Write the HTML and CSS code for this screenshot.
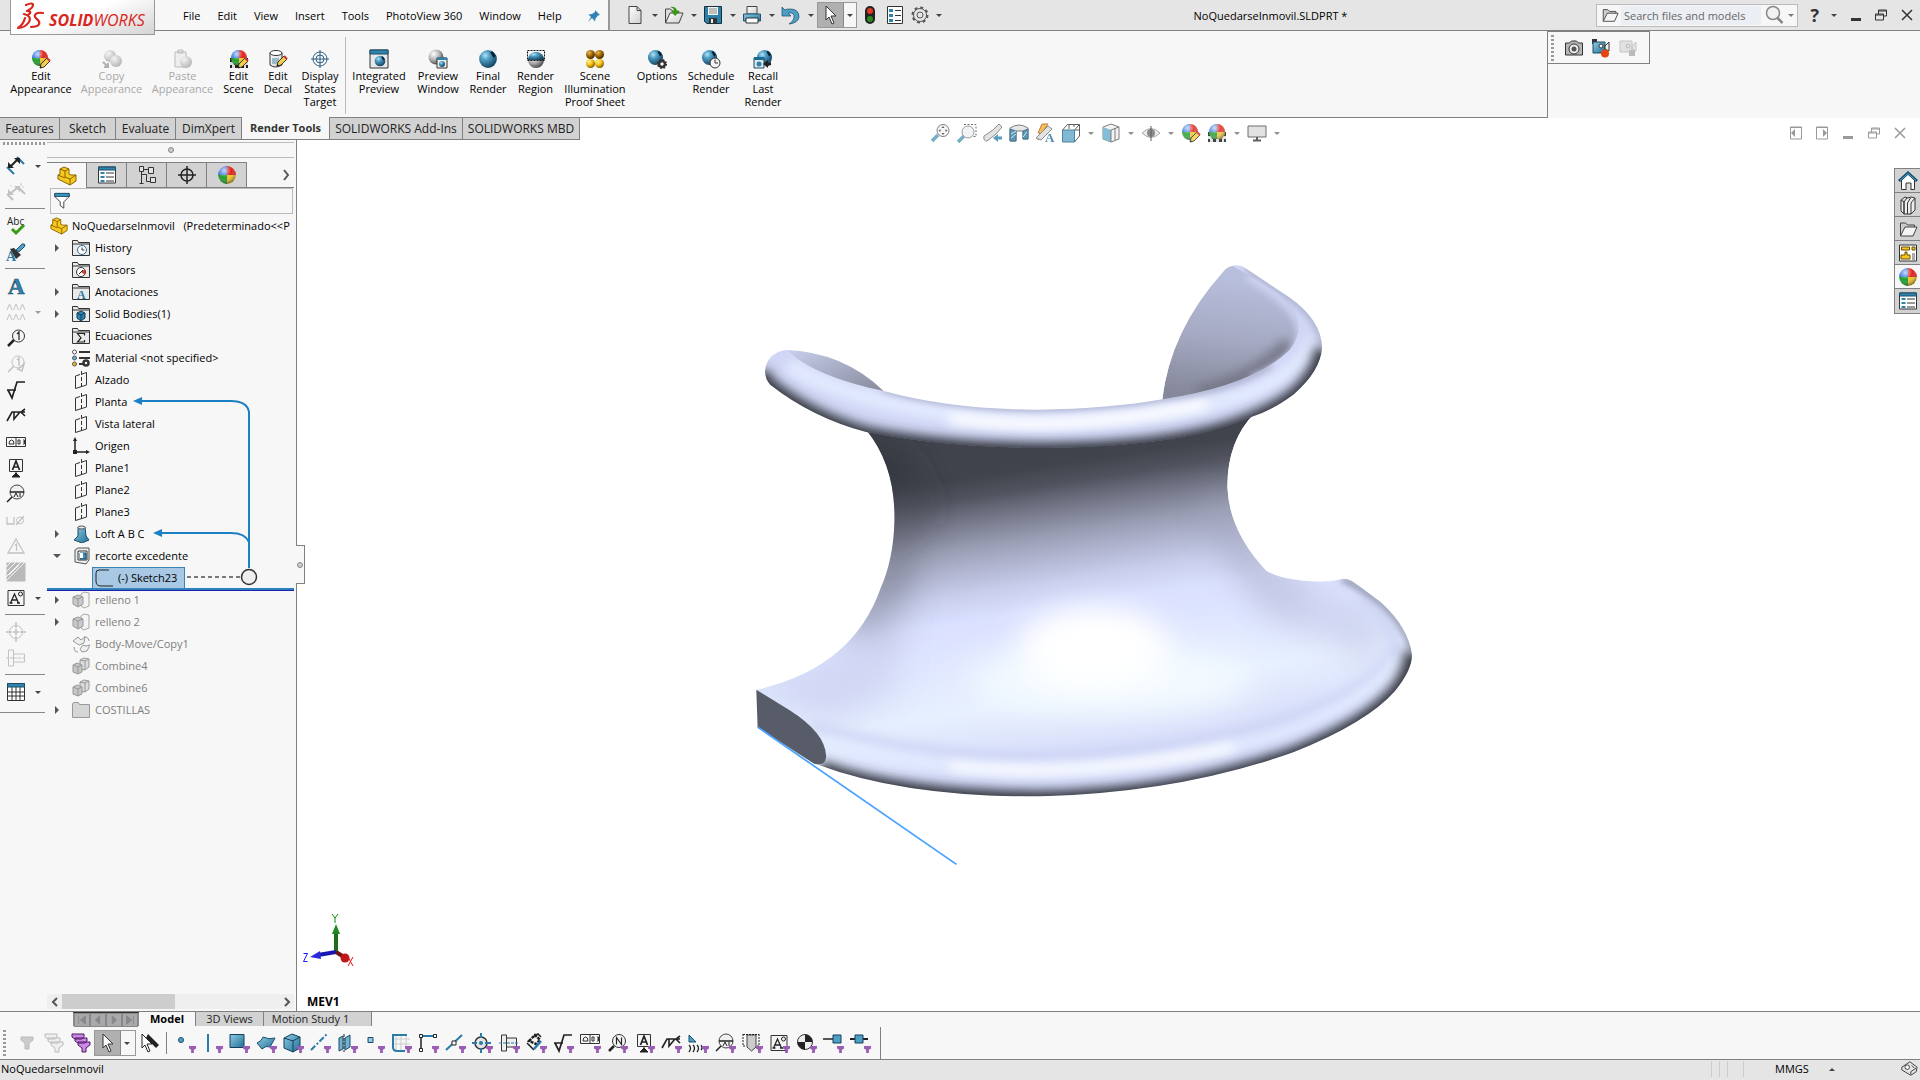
FILE: index.html
```html
<!DOCTYPE html>
<html lang="en">
<head>
<meta charset="utf-8">
<title>NoQuedarseInmovil.SLDPRT</title>
<link rel="stylesheet" href="styles.css">
</head>
<body>
<svg class="defs" aria-hidden="true">
<defs>
<radialGradient id="gBlue" cx=".35" cy=".3" r=".75"><stop offset="0" stop-color="#b5e0f2"/><stop offset=".35" stop-color="#4c9cc4"/><stop offset="1" stop-color="#123f5a"/></radialGradient>
<radialGradient id="gGray" cx=".35" cy=".3" r=".75"><stop offset="0" stop-color="#fff"/><stop offset=".5" stop-color="#b5b5b5"/><stop offset="1" stop-color="#444"/></radialGradient>
<radialGradient id="gPale" cx=".35" cy=".3" r=".75"><stop offset="0" stop-color="#f4f4f4"/><stop offset="1" stop-color="#b4b4b4"/></radialGradient>
<radialGradient id="gGold" cx=".35" cy=".3" r=".75"><stop offset="0" stop-color="#fff0a0"/><stop offset=".5" stop-color="#f2c010"/><stop offset="1" stop-color="#7a5200"/></radialGradient>
<radialGradient id="gBrown" cx=".35" cy=".3" r=".75"><stop offset="0" stop-color="#e8b860"/><stop offset=".5" stop-color="#a06a00"/><stop offset="1" stop-color="#3a2300"/></radialGradient>
<radialGradient id="gShine" cx=".35" cy=".25" r=".8"><stop offset="0" stop-color="#fff" stop-opacity=".75"/><stop offset=".5" stop-color="#fff" stop-opacity="0"/><stop offset="1" stop-color="#000" stop-opacity=".55"/></radialGradient>
<linearGradient id="gSteel" x2="1" y2="1"><stop offset="0" stop-color="#8fcbe4"/><stop offset="1" stop-color="#1f6f96"/></linearGradient>
<linearGradient id="gPaper" x2="1" y2="1"><stop offset="0" stop-color="#fff"/><stop offset="1" stop-color="#cfcfcf"/></linearGradient>
<clipPath id="cBall"><circle cx="9" cy="9" r="8"/></clipPath>

<symbol id="ball" viewBox="0 0 18 18"><g clip-path="url(#cBall)"><path d="M0 0h9v9H0z" fill="#2f6fe0"/><path d="M9 0h9v9H9z" fill="#e0231c"/><path d="M0 9h9v9H0z" fill="#1f9c2c"/><path d="M9 9h9v9H9z" fill="#f0c428"/><circle cx="9" cy="9" r="8" fill="url(#gShine)"/></g></symbol>
<symbol id="sphere" viewBox="0 0 18 18"><circle cx="9" cy="9" r="8" fill="url(#gBlue)"/><path d="M11 3l2-1 3 4-2 2z" fill="#06212f"/></symbol>
<symbol id="pencil" viewBox="0 0 12 12"><path d="M1 11l1-4 6-6 3 3-6 6z" fill="#f5cf4a" stroke="#222" stroke-width=".9"/><path d="M8 1l3 3" stroke="#c33" stroke-width="2"/><path d="M1 11l.5-2 1.5 1.500z" fill="#111"/></symbol>
<symbol id="appear" viewBox="0 0 20 20"><use href="#ball" width="18" height="18"/><use href="#pencil" x="8" y="8" width="12" height="12"/></symbol>
<symbol id="copyap" viewBox="0 0 20 20"><circle cx="8" cy="7" r="6" fill="url(#gPale)"/><circle cx="14" cy="12" r="6" fill="url(#gPale)"/><path d="M1 13l5 5m0-4v4H2" stroke="#b0b0b0" stroke-width="2" fill="none"/></symbol>
<symbol id="pasteap" viewBox="0 0 20 20"><path d="M2 3h11v15H2zM5 1h5v3H5z" fill="#eee" stroke="#bbb"/><circle cx="13" cy="13" r="6" fill="url(#gPale)"/></symbol>
<symbol id="scene" viewBox="0 0 20 20"><path d="M1 9h18v10H1z" fill="#222"/><path d="M1 13h4v3H1zM8 16h4v3H8zM15 13h4v3h-4zM4 9h3v4H4z" fill="#ddd"/><use href="#ball" x="1" width="18" height="18"/><path d="M1 16h18v3H1z" fill="#222"/><path d="M3 16h3v3H3zM9 16h3v3H9zM15 16h2v3h-2z" fill="#ddd"/></symbol>
<symbol id="sceneed" viewBox="0 0 20 20"><use href="#scene" width="20" height="20"/><use href="#pencil" x="8" y="8" width="12" height="12"/></symbol>
<symbol id="decal" viewBox="0 0 20 20"><path d="M2 4v12q5 4 12 0V4" fill="url(#gPaper)" stroke="#333"/><ellipse cx="8" cy="4" rx="6" ry="2.500" fill="#fff" stroke="#333"/><path d="M4 9h7v6H4z" fill="#9cb9c8"/><use href="#pencil" x="8" y="6" width="12" height="12"/></symbol>
<symbol id="target" viewBox="0 0 20 20"><g fill="none" stroke="#2b5f86"><circle cx="10" cy="10" r="7"/><circle cx="10" cy="10" r="4"/><path d="M10 1v18M1 10h18"/></g></symbol>
<symbol id="intprev" viewBox="0 0 20 20"><path d="M1 1h18v18H1z" fill="#e8e8e8" stroke="#333"/><path d="M1 1h18v4H1z" fill="#2f83ad" stroke="#1b4d68"/><use href="#sphere" x="5" y="6" width="12" height="12"/></symbol>
<symbol id="prevwin" viewBox="0 0 20 20"><circle cx="8" cy="8" r="7.500" fill="url(#gGray)"/><path d="M9 9h10v10H9z" fill="#eee" stroke="#333"/><path d="M9 8.500h10V11H9z" fill="#2f83ad"/><circle cx="14" cy="15" r="3" fill="url(#gBlue)"/></symbol>
<symbol id="region" viewBox="0 0 20 20"><circle cx="10" cy="11" r="8" fill="url(#gGray)"/><path d="M2 11a8 8 0 0 1 16 0z" fill="url(#gBlue)"/><path d="M1.500 1.500h17v10h-17z" fill="none" stroke="#111" stroke-dasharray="2 1"/></symbol>
<symbol id="illum" viewBox="0 0 20 20"><circle cx="5.500" cy="5.500" r="4.500" fill="url(#gBrown)"/><circle cx="14.500" cy="5.500" r="4.500" fill="url(#gBrown)"/><circle cx="5.500" cy="14.500" r="4.500" fill="url(#gGold)"/><circle cx="14.500" cy="14.500" r="4.500" fill="url(#gGold)"/></symbol>
<symbol id="opts" viewBox="0 0 20 20"><use href="#sphere" width="17" height="17"/><circle cx="15" cy="15" r="3" fill="none" stroke="#333" stroke-width="2.500"/><circle cx="15" cy="15" r="4.300" fill="none" stroke="#333" stroke-width="1.500" stroke-dasharray="1.700 1.700"/></symbol>
<symbol id="sched" viewBox="0 0 20 20"><use href="#sphere" width="17" height="17"/><circle cx="14" cy="14" r="5" fill="#f4f4f4" stroke="#333"/><path d="M14 10.500V14h3" fill="none" stroke="#333"/></symbol>
<symbol id="recall" viewBox="0 0 20 20"><use href="#sphere" x="3" width="17" height="17"/><path d="M1 9h10v10H1z" fill="#dde7ec" stroke="#1b4d68"/><path d="M1 8h10v3H1z" fill="#1b6a90"/><circle cx="6" cy="15" r="2.500" fill="#2f83ad"/><path d="M10 15l5-4v3h2l1-3v5l-3 1v2z" fill="#222"/></symbol>

<symbol id="new" viewBox="0 0 20 20"><path d="M4 1.500h8l4 4v13H4z" fill="url(#gPaper)" stroke="#444"/><path d="M12 1.500v4h4" fill="none" stroke="#444"/></symbol>
<symbol id="open" viewBox="0 0 20 20"><path d="M1.500 18V4h5l2 2h6v3" fill="#ddd" stroke="#444"/><path d="M1.500 18L6 8h13l-4 10z" fill="url(#gPaper)" stroke="#444"/><path d="M6 2q6-1 7 4h3l-5 5-4-5h3q0-3-4-4z" fill="#3a9a18"/></symbol>
<symbol id="save" viewBox="0 0 20 20"><path d="M1.500 1.500h17v17H4l-2.500-2z" fill="#2b7fa8" stroke="#1a2f3c"/><path d="M5 2h10v8H5z" fill="#f4f4f4"/><path d="M6 4h8M6 6h8M6 8h8" stroke="#888"/><path d="M6 13h8v5H6z" fill="#333"/><path d="M8 14h2v4H8z" fill="#eee"/></symbol>
<symbol id="print" viewBox="0 0 20 20"><path d="M5 1.500h10V9H5z" fill="url(#gPaper)" stroke="#444"/><path d="M1.500 9h17v7h-17z" fill="url(#gSteel)" stroke="#23556e"/><path d="M4 13h12v5H4z" fill="#fff" stroke="#333"/></symbol>
<symbol id="undo" viewBox="0 0 20 20"><path d="M1 2v9h9L7 8q7-1 6 5-1 4-5 6 9-1 10-7 0-8-9-8-4 0-5 1z" fill="#4e9fc5" stroke="#1f5673" stroke-width=".8"/></symbol>
<symbol id="cursor" viewBox="0 0 20 20"><path d="M5 1v14l3-3 3 7 2-1-3-7h5z" fill="#fff" stroke="#333"/></symbol>
<symbol id="traffic" viewBox="0 0 20 20"><rect x="5" y="1" width="10" height="18" rx="5" fill="#222"/><circle cx="10" cy="6" r="3" fill="#e23a20"/><circle cx="10" cy="14" r="3" fill="#2c8a20"/></symbol>
<symbol id="list" viewBox="0 0 20 20"><path d="M2.500 1.500h15v17h-15z" fill="#fff" stroke="#333"/><path d="M4 4h4v3H4zM4 9h4v3H4zM4 14h4v3H4z" fill="#2f83ad"/><path d="M10 5.500h6M10 10.500h6M10 15.500h6" stroke="#333"/></symbol>
<symbol id="gear" viewBox="0 0 20 20"><g fill="none" stroke="#555"><circle cx="10" cy="10" r="7.500" stroke-width="2" stroke-dasharray="3 2.890"/><circle cx="10" cy="10" r="6.500"/><circle cx="10" cy="10" r="3"/></g></symbol>
<symbol id="pin" viewBox="0 0 14 14"><path d="M8 1l5 5-2 .5-2.500 3-.5 3L5 9l-4 4 3-5L1.500 5.500l3.500-.5 3-2z" fill="#2f83b5"/></symbol>
<symbol id="folder" viewBox="0 0 20 20"><path d="M2.500 17V4h5l2 2h7v3" fill="#ccc" stroke="#444"/><path d="M2.500 17L7 8h12l-4 9z" fill="#f4f4f4" stroke="#444"/></symbol>
<symbol id="lens" viewBox="0 0 20 20"><circle cx="9" cy="8" r="6.500" fill="#f2f2f2" stroke="#888" stroke-width="1.500"/><path d="M13.500 13l5 5" stroke="#888" stroke-width="2.500"/></symbol>
<symbol id="min" viewBox="0 0 14 14"><path d="M2 10h10v3H2z" fill="currentColor"/></symbol>
<symbol id="restore" viewBox="0 0 14 14"><path d="M1.500 6h8v6h-8zM4.500 6V2h8v6h-3M1.500 7h8M4.500 3h8" fill="none" stroke="currentColor"/></symbol>
<symbol id="close" viewBox="0 0 14 14"><path d="M2 2l10 10M12 2L2 12" stroke="currentColor" stroke-width="1.500"/></symbol>
<symbol id="dockl" viewBox="0 0 14 14"><path d="M1.500 1h11v12h-11zM1.500 1.500h11" fill="none" stroke="currentColor"/><path d="M2 7l4-4v8z" fill="currentColor"/></symbol>
<symbol id="dockr" viewBox="0 0 14 14"><path d="M1.500 1h11v12h-11zM1.500 1.500h11" fill="none" stroke="currentColor"/><path d="M12 7L8 3v8z" fill="currentColor"/></symbol>
<symbol id="camera" viewBox="0 0 20 20"><path d="M1.500 5h4l2-2h5l2 2h4v12h-17z" fill="#b5b5b5" stroke="#333"/><circle cx="10" cy="11" r="5" fill="#eee" stroke="#333"/><circle cx="10" cy="11" r="2.500" fill="#555"/></symbol>
<symbol id="rec" viewBox="0 0 20 20"><path d="M1 1h5v5H1z" fill="#333"/><path d="M2 4h12v11H2z" fill="url(#gSteel)" stroke="#1d4c64"/><path d="M14 8l4-4v9l-4-2z" fill="#eee" stroke="#333"/><circle cx="10" cy="8" r="2" fill="#fff" stroke="#333"/><circle cx="14" cy="15.500" r="4" fill="#e8430c"/></symbol>
<symbol id="recoff" viewBox="0 0 20 20"><path d="M2 3h12v11H2zM14 8l4-4v9l-4-2z" fill="#e2e2e2" stroke="#c4c4c4"/><circle cx="10" cy="8" r="2" fill="none" stroke="#bbb"/><path d="M11 12h6v6h-6z" fill="#bbb"/></symbol>

<symbol id="zfit" viewBox="0 0 20 20"><path d="M1 18l6-6" stroke="#5fa0bd" stroke-width="3.500"/><circle cx="12" cy="7.500" r="6" fill="#f6f6f6" stroke="#666"/><path d="M12 3l1.500 2h-3zM12 12l1.500-2h-3zM7.500 7.500l2-1.500v3zM16.500 7.500l-2-1.500v3z" fill="#444"/></symbol>
<symbol id="zarea" viewBox="0 0 20 20"><path d="M7 1.500h12v12h-4" fill="none" stroke="#555" stroke-dasharray="2 1.500"/><path d="M1 19l6-6" stroke="#5fa0bd" stroke-width="3.500"/><circle cx="11" cy="9" r="6" fill="#eef3f5" stroke="#888"/></symbol>
<symbol id="zprev" viewBox="0 0 20 20"><path d="M1 13l9-6 6-6 3 3-6 7-9 7q-4 0-3-5z" fill="#ddd" stroke="#777"/><path d="M10 15l5-4v2.500h4v3h-4V19z" fill="#3f8db3"/></symbol>
<symbol id="section" viewBox="0 0 20 20"><path d="M1 5q9-6 18 0v11h-5V8H7v10H1z" fill="#e2e2e2" stroke="#666"/><path d="M1 6l6 2v10H1zM14 8l5-2v10h-5z" fill="#3d86aa" stroke="#2a5e7a"/><path d="M2 11l5-3M2 15l5-4M14 14l4-5" stroke="#cfe6f0"/></symbol>
<symbol id="dynamic" viewBox="0 0 20 20"><path d="M3 10l4-9h6L9 7h5L3 17l2-7z" fill="#f3b23c" stroke="#b46a20"/><path d="M1 15L13 3l4 3L6 17z" fill="#ddd" stroke="#777"/><text x="10" y="19" class="serif" font-size="13" fill="#2f7aa3">A</text></symbol>
<symbol id="orient" viewBox="0 0 20 20"><path d="M1.500 7h12v12h-12z" fill="#69adcc" stroke="#2f6f90"/><path d="M1.500 7l5-5.500h12V13l-5 6M13.500 7l5-5.500M8 1.500V6M13 1.500V4M18 7h-4" fill="none" stroke="#444"/></symbol>
<symbol id="style" viewBox="0 0 20 20"><path d="M2 4l8-3 8 3v12l-8 3-8-3z" fill="#f2f2f2" stroke="#666"/><path d="M2 4l8 3v12l-8-3z" fill="#6fb2d0"/><path d="M10 7l8-3M10 7v12M14 5v12" stroke="#666" fill="none"/></symbol>
<symbol id="eye" viewBox="0 0 20 20"><path d="M1 10q9-9 18 0-9 9-18 0z" fill="#e8e8e8" stroke="#999"/><circle cx="10" cy="10" r="4" fill="#777"/><path d="M10 3v15" stroke="#444"/></symbol>
<symbol id="monitor" viewBox="0 0 20 20"><path d="M1 3h18v11H1z" fill="#ddd" stroke="#555"/><path d="M10 14v3M6 17.500h8" stroke="#444" stroke-width="2"/></symbol>

<symbol id="part" viewBox="0 0 20 20"><path d="M1 9l2-1V3l4-2 5 2v5l2 1 5 0v6l-6 4L1 13z" fill="#f7c81e" stroke="#8a6400"/><path d="M3 3l5 2 4-2M8 5v6l5 2 6-4M13 13v6M1 9l7 3" fill="none" stroke="#8a6400"/></symbol>
<symbol id="prop" viewBox="0 0 20 20"><path d="M1.500 2h17v16h-17z" fill="#fff" stroke="#333"/><path d="M1.500 2h17v3h-17z" fill="#2f83ad" stroke="#1b4d68"/><path d="M3.500 7h4v2h-4zM3.500 11h4v2h-4zM3.500 15h4v2h-4z" fill="#2f83ad"/><path d="M9 8h8M9 12h8M9 16h8" stroke="#333"/></symbol>
<symbol id="config" viewBox="0 0 20 20"><path d="M2.500 1.500h4v5h-4zM4.500 6.500v12M7 4.500h5M4.500 9.500h5v7h4M11.500 2.500h5v6h-5zM13.500 12.500h5v5h-5zM2.500 18.500h4" fill="#f4f4f4" fill-opacity=".5" stroke="#333"/></symbol>
<symbol id="cross" viewBox="0 0 20 20"><circle cx="10" cy="10" r="6" fill="none" stroke="#222" stroke-width="1.500"/><path d="M10 1v18M1 10h18" stroke="#222" stroke-width="1.500"/></symbol>
<symbol id="filter" viewBox="0 0 18 20"><path d="M1 2h16v3l-6 6v7l-4-3v-4L1 5z" fill="#fff" stroke="#333"/><path d="M1 1.500h16V5H1z" fill="#3a92bd" stroke="#1b4d68"/></symbol>

<symbol id="dir" viewBox="0 0 18 18"><path d="M.5 16.500v-15h5l1 2h11v13z" fill="#e9e9e9" stroke="#333"/><path d="M1 5h16" stroke="#333"/></symbol>
<symbol id="t-hist" viewBox="0 0 18 18"><use href="#dir" width="18" height="18"/><circle cx="10" cy="11" r="4.500" fill="#fff" stroke="#2f6f9a"/><path d="M10 8.500V11h2.500" fill="none" stroke="#333"/></symbol>
<symbol id="t-sens" viewBox="0 0 18 18"><use href="#dir" width="18" height="18"/><circle cx="9" cy="11" r="4.500" fill="#fff" stroke="#333"/><path d="M9 11l4-3v6z" fill="#e04020"/><path d="M7 13l4-4" stroke="#222"/></symbol>
<symbol id="t-ann" viewBox="0 0 18 18"><use href="#dir" width="18" height="18"/><text x="5" y="15.500" class="serif" font-size="12" fill="#2f7aa3">A</text></symbol>
<symbol id="t-solid" viewBox="0 0 18 18"><use href="#dir" width="18" height="18"/><path d="M5 8l4-2 4 2v5l-4 3-4-3z" fill="#2f83ad" stroke="#123f5a"/><path d="M5 8l4 2 4-2M9 10v6" fill="none" stroke="#123f5a"/></symbol>
<symbol id="t-eq" viewBox="0 0 18 18"><use href="#dir" width="18" height="18"/><path d="M12.500 8.500v-2h-7L9 11l-3.500 4h7v-2" fill="none" stroke="#222" stroke-width="1.200"/></symbol>
<symbol id="t-mat" viewBox="0 0 18 18"><circle cx="2.500" cy="3" r="2" fill="#fff" stroke="#555"/><circle cx="2.500" cy="9" r="2" fill="#5fb0d8" stroke="#555"/><circle cx="2.500" cy="15" r="2" fill="#f0b820" stroke="#555"/><path d="M7 3h11M7 9h11M7 15h4" stroke="#333" stroke-width="2"/><circle cx="14" cy="14" r="2.500" fill="none" stroke="#333" stroke-width="2.500"/></symbol>
<symbol id="t-plane" viewBox="0 0 18 18"><path d="M3.500 5v12.500l11-3.500V1.500L10 3M8 3.500L3.500 5" fill="none" stroke="#333"/><path d="M9.500 0v18" stroke="#333" stroke-dasharray="4 2"/></symbol>
<symbol id="t-orig" viewBox="0 0 18 18"><path d="M3 2v13h13" fill="none" stroke="#222" stroke-width="1.500"/><path d="M3 0l2 4H1zM18 15l-4-2v4zM1 13h4v4H1z" fill="#222"/></symbol>
<symbol id="t-loft" viewBox="0 0 18 18"><path d="M6 2h7l1 9 3 4-7 3-8-3 4-4z" fill="url(#gSteel)" stroke="#1b4d68"/><ellipse cx="9.500" cy="2.500" rx="3.500" ry="1.500" fill="#eee" stroke="#555"/></symbol>
<symbol id="t-cut" viewBox="0 0 18 18"><path d="M3 3l3-2h11v12l-3 4-11-2z" fill="#eee" stroke="#555"/><path d="M6 4h9v9H6z" fill="#fff" stroke="#333"/><path d="M8 6h6v6H8z" fill="#3a92bd" stroke="#1b4d68"/><path d="M8 6h3v5H8z" fill="#fff"/></symbol>
<symbol id="t-sk" viewBox="0 0 18 18"><path d="M14 1H4Q1 1 1 4v8q0 5 5 5h12" fill="none" stroke="#222"/></symbol>
<symbol id="t-fill" viewBox="0 0 18 18"><path d="M9 3l3-2 5 1v13l-5 2-3-2z" fill="#f4f4f4" stroke="#a8a8a8"/><path d="M1 6l5-2 5 2v7l-5 3-5-3z" fill="#c9c9c9" stroke="#999"/><path d="M1 6l5 2 5-2M6 8v8" fill="none" stroke="#999"/></symbol>
<symbol id="t-move" viewBox="0 0 18 18"><path d="M1 6l5-4 3 3 4-3-1 6-5 2zM8 14l3-4 3 1 4-1-3 6-5 1zM12 2q4-1 5 4M6 17q-4 0-4-5" fill="#eee" stroke="#999"/></symbol>
<symbol id="t-comb" viewBox="0 0 18 18"><path d="M8 3l4-2 5 1v8l-4 3-5-1z" fill="#dcdcdc" stroke="#999"/><path d="M8 3l5 1 4-2M13 4v9" fill="none" stroke="#999"/><path d="M1 8l4-2 5 2v7l-4 2-5-2z" fill="#c6c6c6" stroke="#999"/><path d="M1 8l5 2 4-2M6 10v7" fill="none" stroke="#999"/></symbol>
<symbol id="t-fold" viewBox="0 0 18 18"><path d="M.5 16.500V3l1-1.500h5l1 2h10v13z" fill="#d6d6d6" stroke="#999"/></symbol>

<symbol id="l-dim" viewBox="0 0 20 20"><path d="M1 11l7 7M11 1l7 7" fill="none" stroke="#2a7ba6" stroke-width="2"/><path d="M4 11l8-8" stroke="#222" stroke-width="2"/><path d="M2 12V6l6 6zM8 2h6v6z" fill="#222"/></symbol>
<symbol id="l-auto" viewBox="0 0 20 20"><path d="M1 12l6 6M12 5l7 7M4 12l8-7" fill="none" stroke="#c2c2c2" stroke-width="2"/><path d="M2 13V7l6 6zM8 4h6v6z" fill="#c2c2c2"/><path d="M4 3l2 2M15 1v3M18 5h-2" stroke="#ccc"/></symbol>
<symbol id="l-abc" viewBox="0 0 20 20"><text x="1" y="9" class="sans" font-size="10" fill="#222">Abc</text><path d="M6 13l4 4 8-8" fill="none" stroke="#3a9a18" stroke-width="3"/></symbol>
<symbol id="l-brush" viewBox="0 0 20 20"><path d="M10 8l6-6q3-1 3 2l-6 6z" fill="#4e9fc5" stroke="#23556e"/><path d="M4 7l4-1 7 7-5 4z" fill="#333"/><text x="0" y="19" class="serif" font-size="14" fill="#2f7aa3">A</text></symbol>
<symbol id="l-note" viewBox="0 0 20 20"><text x="2" y="18" class="serif" font-size="23" fill="#2f83ad" stroke="#1b4d68" stroke-width=".6">A</text></symbol>
<symbol id="l-aaa" viewBox="0 0 20 20"><path d="M1 8l2.500-6L6 8M7.500 8L10 2l2.500 6M14 8l2.500-6L19 8M1 18l2.500-6L6 18M7.500 18l2.500-6 2.500 6M14 18l2.500-6 2.500 6" fill="none" stroke="#c4c4c4"/></symbol>
<symbol id="l-bal" viewBox="0 0 20 20"><circle cx="12.500" cy="8" r="6" fill="#f4f4f4" stroke="#333"/><path d="M8 12l-6 6" stroke="#222" stroke-width="2.500"/><path d="M11 6l2-2v8" fill="none" stroke="#222" stroke-width="1.200"/></symbol>
<symbol id="s-bal" viewBox="0 0 20 20"><circle cx="12" cy="8" r="6.500" fill="#f4f4f4" stroke="#333"/><path d="M7 13l-5 5" stroke="#222" stroke-width="2.500"/><path d="M9.500 11.500v-7l5 7v-7" fill="none" stroke="#222" stroke-width="1.200"/></symbol>
<symbol id="l-bal2" viewBox="0 0 20 20"><circle cx="12" cy="8" r="6" fill="none" stroke="#c2c2c2"/><path d="M8 12l-6 6M11 6l2-2v8M12 15l6-5-2 7z" fill="none" stroke="#c2c2c2" stroke-width="1.500"/></symbol>
<symbol id="l-surf" viewBox="0 0 20 20"><path d="M1 10h9M2 10l4 8 5-16h8" fill="none" stroke="#222" stroke-width="1.700"/></symbol>
<symbol id="l-weld" viewBox="0 0 20 20"><path d="M1 15l5-9h13M8 6v7l6-7M19 3l-4 3 4 4" fill="none" stroke="#222" stroke-width="1.600"/></symbol>
<symbol id="l-tol" viewBox="0 0 20 20"><path d="M.5 5.500h19v9H.500zM10 5.500v9M3 12h5q0-4-2.500-4T3 12zM12 8h2v4h-2zM17 8h1.500v4H17M17 10h1" fill="none" stroke="#333"/></symbol>
<symbol id="l-datum" viewBox="0 0 20 20"><path d="M3.500 1.500h13v12h-13z" fill="#f4f4f4" stroke="#333"/><path d="M6.500 12l3.500-9 3.500 9M8 9h4" fill="none" stroke="#222" stroke-width="1.700"/><path d="M10 13v3M6 19l4-4 4 4z" fill="#222" stroke="#222"/></symbol>
<symbol id="l-dt" viewBox="0 0 20 20"><circle cx="11" cy="8" r="7" fill="#f0f0f0" stroke="#444"/><path d="M4 8h14M6 13l-5 5" stroke="#222" stroke-width="1.500"/><path d="M8 13l2-4 2 4M14 9v4" fill="none" stroke="#222"/></symbol>
<symbol id="l-hole" viewBox="0 0 20 20"><path d="M1 7v7h7V7M18 6l-8 9" fill="none" stroke="#c2c2c2" stroke-width="1.300"/><circle cx="14" cy="10.500" r="3.500" fill="none" stroke="#c2c2c2"/></symbol>
<symbol id="l-rev" viewBox="0 0 20 20"><path d="M10 3l8 14H2zM9 9l1.500-1v7" fill="none" stroke="#c2c2c2" stroke-width="1.300"/></symbol>
<symbol id="l-hatch" viewBox="0 0 20 20"><path d="M.5.500h19v19H.500z" fill="#b9b9b9"/><path d="M0 10L10 0M0 15L15 0M0 19L19 0M0 5l5-5M3 13L13 3" stroke="#f4f4f4"/></symbol>
<symbol id="l-block" viewBox="0 0 20 20"><path d="M2 2.500h16v15H2z" fill="#f4f4f4" stroke="#333"/><path d="M4.500 15l4-9 4 9M6 12h5M3.500 15h3M11 15h3" fill="none" stroke="#222" stroke-width="1.300"/><circle cx="14.500" cy="6" r="2" fill="none" stroke="#222"/></symbol>
<symbol id="l-ctr" viewBox="0 0 20 20"><circle cx="10" cy="10" r="6.500" fill="none" stroke="#c2c2c2"/><path d="M10 0v6M10 14v6M0 10h6M14 10h6M10 7v6M7 10h6" stroke="#c2c2c2" stroke-width="1.500"/></symbol>
<symbol id="l-cl" viewBox="0 0 20 20"><path d="M2.500 2h5v16h-5zM7.500 6h11v8h-11z" fill="none" stroke="#c2c2c2"/><path d="M0 10h20" stroke="#c2c2c2" stroke-dasharray="3 1"/></symbol>
<symbol id="l-tab" viewBox="0 0 20 20"><path d="M1.500 1.500h17v17h-17zM1.500 10h17M1.500 14h17M6 5v13M10 5v13M14 5v13" fill="#fff" stroke="#333"/><path d="M1.500 1.500h17V5h-17z" fill="#2f83ad" stroke="#1b4d68"/></symbol>

<symbol id="f0" viewBox="0 0 20 20"><path d="M4 4h12v3l-4 3v6H8v-6L4 7z" fill="#ccc" stroke="#bbb"/></symbol>
<symbol id="f1" viewBox="0 0 20 20"><path d="M1 1h12v3l-2 2H4L1 4zM4 5h12v3l-2 2H7L4 8zM7 9h12v3l-4 3v4h-4v-4l-4-3z" fill="#eee" stroke="#bbb"/></symbol>
<symbol id="f2" viewBox="0 0 20 20"><path d="M1 1h12v3l-2 2H4L1 4zM4 5h12v3l-2 2H7L4 8zM7 9h12v3l-4 3v4h-4v-4l-4-3z" fill="#c98ae0" stroke="#4f1768"/></symbol>
<symbol id="cursors" viewBox="0 0 20 20"><path d="M8 1l11 11-3 3L6 5z" fill="#222"/><path d="M2 1v14l3-3 3 7 2-1-3-7h5z" fill="#fff" stroke="#222"/></symbol>
<symbol id="s1" viewBox="0 0 20 20"><circle cx="6" cy="7" r="2.500" fill="#4e9fc5" stroke="#1b4d68"/></symbol>
<symbol id="s2" viewBox="0 0 20 20"><path d="M6 1v18" stroke="#2a7ba6" stroke-width="2"/></symbol>
<symbol id="s3" viewBox="0 0 20 20"><path d="M1 1.500h14v13H1z" fill="url(#gSteel)" stroke="#123f5a"/></symbol>
<symbol id="s4" viewBox="0 0 20 20"><path d="M1 10q5-2 6-6 6 3 12 1-2 4-5 9-4-2-8 2z" fill="url(#gSteel)" stroke="#1b4d68"/></symbol>
<symbol id="s5" viewBox="0 0 20 20"><path d="M1 5l8-4 8 3v11l-7 4-9-4z" fill="url(#gSteel)" stroke="#123f5a"/><path d="M1 5l9 3 7-4M10 8v11" fill="none" stroke="#123f5a"/></symbol>
<symbol id="s6" viewBox="0 0 20 20"><path d="M1 17L17 1" stroke="#2a7ba6" stroke-width="2" stroke-dasharray="6 2 2 2"/></symbol>
<symbol id="s7" viewBox="0 0 20 20"><path d="M2 5l4-2v13l-4 2zM8 5l5-3v12l-5 3z" fill="#6fb2d0" stroke="#1b4d68"/><path d="M7 1v18" stroke="#222" stroke-dasharray="3 1"/></symbol>
<symbol id="s8" viewBox="0 0 20 20"><path d="M4 4.500h5v5H4z" fill="#8fcbe4" stroke="#1b4d68"/></symbol>
<symbol id="s9" viewBox="0 0 20 20"><path d="M5 1v17M10 1v17M15 1v17M1 6h18M1 11h18" stroke="#ccc"/><path d="M16 2H2v12q0 4 4 4h8" fill="none" stroke="#2a7ba6" stroke-width="2"/></symbol>
<symbol id="s10" viewBox="0 0 20 20"><path d="M3 17V3h14" fill="none" stroke="#222" stroke-width="1.500"/><path d="M5 3h11" stroke="#2a7ba6" stroke-width="2"/><path d="M1.500 1.500h3v3h-3zM15.500 1.500h3v3h-3zM1.500 15.500h3v3h-3z" fill="#fff" stroke="#222"/></symbol>
<symbol id="s11" viewBox="0 0 20 20"><path d="M1 17L17 2" stroke="#2a7ba6" stroke-width="2"/><path d="M7 8h4v4H7z" fill="#fff" stroke="#222"/></symbol>
<symbol id="s12" viewBox="0 0 20 20"><circle cx="9" cy="10" r="6" fill="#e4e4e4" stroke="#333" stroke-width="1.500"/><circle cx="9" cy="10" r="2" fill="#2a7ba6"/><path d="M9 0v5M9 15v5M0 10h5M13 10h6" stroke="#2a7ba6" stroke-width="2"/></symbol>
<symbol id="s13" viewBox="0 0 20 20"><path d="M2.500 2h5v16h-5zM7.500 5h10v9h-10z" fill="#eee" stroke="#333"/><path d="M0 10h19" stroke="#2a7ba6" stroke-dasharray="3 1"/></symbol>
<symbol id="s14" viewBox="0 0 20 20"><path d="M1 10l7 7M8 3l4-2 3 3" fill="none" stroke="#222" stroke-width="1.500"/><path d="M3 8l6-6 5 5-4 4z" fill="none" stroke="#222" stroke-width="2.500" stroke-dasharray="3 1"/><path d="M8 16l7-8" stroke="#2a7ba6" stroke-width="2.500"/></symbol>
<symbol id="s20" viewBox="0 0 20 20"><path d="M1 2v7h7z" fill="#4e9fc5" stroke="#1b4d68"/><path d="M1 12q3 3 0 7M5 12q3 3 0 7M9 12q3 3 0 7M13 12q2 3 0 5" fill="none" stroke="#222" stroke-width="1.300"/></symbol>
<symbol id="s22" viewBox="0 0 20 20"><path d="M5 2h9v12l-4.500 4L5 14z" fill="#ccc" stroke="#444"/><path d="M1 1.500h16M1 1v12h3M17 1v12h-3" fill="none" stroke="#222" stroke-dasharray="2 1"/></symbol>
<symbol id="s24" viewBox="0 0 20 20"><circle cx="9" cy="9" r="7.500" fill="#eee" stroke="#333"/><path d="M9 1.500A7.500 7.500 0 0 1 16.500 9H9zM9 16.500A7.500 7.500 0 0 1 1.500 9H9z" fill="#222"/></symbol>
<symbol id="s25" viewBox="0 0 20 20"><path d="M0 6h10" stroke="#222" stroke-width="1.500"/><path d="M10 2h8v8h-8z" fill="#4e9fc5" stroke="#123f5a"/></symbol>
<symbol id="s26" viewBox="0 0 20 20"><path d="M0 6h18" stroke="#222" stroke-width="2"/><path d="M5 2h8v8H5z" fill="#4e9fc5" stroke="#123f5a"/></symbol>

<symbol id="r-home" viewBox="0 0 20 20"><path d="M3.500 9v9.500h13V9L10 3z" fill="#fff" stroke="#333"/><path d="M8 19v-7h5v7" fill="#ddd" stroke="#333"/><path d="M1 10l9-8 9 8" fill="none" stroke="#174f70" stroke-width="3"/><path d="M2 9.500l8-7 8 7" fill="none" stroke="#4e9fc5"/></symbol>
<symbol id="r-books" viewBox="0 0 20 20"><path d="M3 5l3 2v12l-3-3zM3 5l4-3 3 1 3-1 4 1v12l-4 4H6V7l3-4M9.500 19V8l3-5M13 19V8l4-5" fill="#eee" stroke="#333"/></symbol>
<symbol id="r-view" viewBox="0 0 20 20"><path d="M1.500 2h17v16h-17z" fill="#fff" stroke="#333"/><path d="M3.500 4h8v3h-8zM14 4h3v3h-3zM7 9h2v3h3v4H3v-4h4z" fill="#f7c81e" stroke="#6b4e00"/><path d="M14 10h3v7h-3z" fill="#aaa"/></symbol>
<symbol id="tag" viewBox="0 0 20 20"><path d="M2 8l9-6 8 6-1 5-6 4L2 11z" fill="#e4e4e4" stroke="#333"/><circle cx="8" cy="8" r="2.500" fill="#fff" stroke="#333"/><path d="M13 6l3 3M12 16v-3l6-4" stroke="#333" fill="none"/></symbol>
</defs>
</svg>

<header class="titlebar">
  <div class="brand">
    <svg class="ds" viewBox="0 0 28 30" aria-hidden="true"><g fill="none" stroke="#d9261c" stroke-width="2.200" stroke-linecap="round" stroke-linejoin="round"><path d="M9 3q7-3 7 0 0 3-6 6 6 0 1 4"/><path d="M7 12q8 2 5 8-4 6-11 6 5-3 7-10"/><path d="M26 11q-7-1-8 2-1 2 3 5 3 4-1 6-3 1-6 1"/></g></svg>
    <span class="word"><b>SOLID</b>WORKS</span>
  </div>
  <nav class="menu">
    <a href="#">File</a><a href="#">Edit</a><a href="#">View</a><a href="#">Insert</a><a href="#">Tools</a><a href="#">PhotoView 360</a><a href="#">Window</a><a href="#">Help</a>
    <button aria-label="Pin menu"><svg class="i14"><use href="#pin"/></svg></button>
  </nav>
  <div class="quick">
    <button aria-label="New"><svg class="i20"><use href="#new"/></svg></button><button class="dd" aria-label="New options"></button>
    <button aria-label="Open"><svg class="i20"><use href="#open"/></svg></button><button class="dd" aria-label="Open options"></button>
    <button aria-label="Save"><svg class="i20"><use href="#save"/></svg></button><button class="dd" aria-label="Save options"></button>
    <button aria-label="Print"><svg class="i20"><use href="#print"/></svg></button><button class="dd" aria-label="Print options"></button>
    <button aria-label="Undo"><svg class="i20"><use href="#undo"/></svg></button><button class="dd" aria-label="Undo options"></button>
    <span class="pick"><button class="on" aria-label="Select"><svg class="i20"><use href="#cursor"/></svg></button><button class="dd" aria-label="Select options"></button></span>
    <button aria-label="Rebuild"><svg class="i20"><use href="#traffic"/></svg></button>
    <button aria-label="File properties"><svg class="i20"><use href="#list"/></svg></button>
    <button aria-label="Settings"><svg class="i20"><use href="#gear"/></svg></button><button class="dd" aria-label="Settings options"></button>
  </div>
  <h1>NoQuedarseInmovil.SLDPRT *</h1>
  <div class="search">
    <svg class="i18"><use href="#folder"/></svg>
    <input type="text" aria-label="Search files and models" placeholder="Search files and models">
    <button aria-label="Search"><svg class="i20"><use href="#lens"/></svg></button><button class="dd" aria-label="Search options"></button>
  </div>
  <div class="window-buttons">
    <button class="help">?</button><button class="dd" aria-label="Help options"></button>
    <button aria-label="Minimize"><svg class="i14"><use href="#min"/></svg></button>
    <button aria-label="Restore"><svg class="i14"><use href="#restore"/></svg></button>
    <button aria-label="Close"><svg class="i14"><use href="#close"/></svg></button>
  </div>
</header>

<section class="ribbon-row">
  <div class="ribbon">
    <button><svg class="i20"><use href="#appear"/></svg>Edit<br>Appearance</button>
    <button disabled><svg class="i20"><use href="#copyap"/></svg>Copy<br>Appearance</button>
    <button disabled><svg class="i20"><use href="#pasteap"/></svg>Paste<br>Appearance</button>
    <button><svg class="i20"><use href="#sceneed"/></svg>Edit<br>Scene</button>
    <button><svg class="i20"><use href="#decal"/></svg>Edit<br>Decal</button>
    <button><svg class="i20"><use href="#target"/></svg>Display<br>States<br>Target</button>
    <span class="divider"></span>
    <button><svg class="i20"><use href="#intprev"/></svg>Integrated<br>Preview</button>
    <button><svg class="i20"><use href="#prevwin"/></svg>Preview<br>Window</button>
    <button><svg class="i20"><use href="#sphere"/></svg>Final<br>Render</button>
    <button><svg class="i20"><use href="#region"/></svg>Render<br>Region</button>
    <button><svg class="i20"><use href="#illum"/></svg>Scene<br>Illumination<br>Proof Sheet</button>
    <button><svg class="i20"><use href="#opts"/></svg>Options</button>
    <button><svg class="i20"><use href="#sched"/></svg>Schedule<br>Render</button>
    <button><svg class="i20"><use href="#recall"/></svg>Recall<br>Last<br>Render</button>
  </div>
  <div class="ribbon-side">
    <div class="capture">
      <span class="grip-v"></span>
      <button aria-label="Capture image"><svg class="i20"><use href="#camera"/></svg></button>
      <button aria-label="Record video"><svg class="i20"><use href="#rec"/></svg></button>
      <button aria-label="Stop recording" disabled><svg class="i20"><use href="#recoff"/></svg></button>
    </div>
  </div>
</section>

<div class="tab-row">
  <nav class="tabs">
    <button>Features</button><button>Sketch</button><button>Evaluate</button><button>DimXpert</button><button class="active">Render Tools</button><button>SOLIDWORKS Add-Ins</button><button>SOLIDWORKS MBD</button>
  </nav>
  <div class="hud">
    <button aria-label="Zoom to fit"><svg class="i20"><use href="#zfit"/></svg></button>
    <button aria-label="Zoom to area"><svg class="i20"><use href="#zarea"/></svg></button>
    <button aria-label="Previous view"><svg class="i20"><use href="#zprev"/></svg></button>
    <button aria-label="Section view"><svg class="i20"><use href="#section"/></svg></button>
    <button aria-label="Dynamic annotation views"><svg class="i20"><use href="#dynamic"/></svg></button>
    <button aria-label="View orientation"><svg class="i20"><use href="#orient"/></svg></button><button class="dd" aria-label="Orientation options"></button>
    <button aria-label="Display style"><svg class="i20"><use href="#style"/></svg></button><button class="dd" aria-label="Style options"></button>
    <button aria-label="Hide or show items"><svg class="i20"><use href="#eye"/></svg></button><button class="dd" aria-label="Visibility options"></button>
    <button aria-label="Edit appearance"><svg class="i20"><use href="#appear"/></svg></button>
    <button aria-label="Apply scene"><svg class="i20"><use href="#scene"/></svg></button><button class="dd" aria-label="Scene options"></button>
    <button aria-label="View settings"><svg class="i20"><use href="#monitor"/></svg></button><button class="dd" aria-label="View options"></button>
  </div>
  <div class="doc-buttons">
    <button aria-label="Dock left"><svg class="i14"><use href="#dockl"/></svg></button>
    <button aria-label="Dock right"><svg class="i14"><use href="#dockr"/></svg></button>
    <button aria-label="Minimize document"><svg class="i14"><use href="#min"/></svg></button>
    <button aria-label="Restore document"><svg class="i14"><use href="#restore"/></svg></button>
    <button aria-label="Close document"><svg class="i14"><use href="#close"/></svg></button>
  </div>
</div>

<main class="work">
  <aside class="side-tools">
    <span class="grip-h"></span>
    <div class="tool"><button aria-label="Smart dimension"><svg class="i20"><use href="#l-dim"/></svg></button><button class="dd" aria-label="Dimension options"></button></div>
    <div class="tool"><button aria-label="Auto dimension" disabled><svg class="i20"><use href="#l-auto"/></svg></button></div>
    <hr>
    <div class="tool"><button aria-label="Spell check"><svg class="i20"><use href="#l-abc"/></svg></button></div>
    <div class="tool"><button aria-label="Format painter"><svg class="i20"><use href="#l-brush"/></svg></button></div>
    <hr>
    <div class="tool"><button aria-label="Note"><svg class="i20"><use href="#l-note"/></svg></button></div>
    <div class="tool pale"><button aria-label="Note pattern" disabled><svg class="i20"><use href="#l-aaa"/></svg></button><button class="dd" aria-label="Pattern options"></button></div>
    <div class="tool"><button aria-label="Balloon"><svg class="i20"><use href="#l-bal"/></svg></button></div>
    <div class="tool"><button aria-label="Auto balloon" disabled><svg class="i20"><use href="#l-bal2"/></svg></button></div>
    <div class="tool"><button aria-label="Surface finish"><svg class="i20"><use href="#l-surf"/></svg></button></div>
    <div class="tool"><button aria-label="Weld symbol"><svg class="i20"><use href="#l-weld"/></svg></button></div>
    <div class="tool"><button aria-label="Geometric tolerance"><svg class="i20"><use href="#l-tol"/></svg></button></div>
    <div class="tool"><button aria-label="Datum feature"><svg class="i20"><use href="#l-datum"/></svg></button></div>
    <div class="tool"><button aria-label="Datum target"><svg class="i20"><use href="#l-dt"/></svg></button></div>
    <div class="tool"><button aria-label="Hole callout" disabled><svg class="i20"><use href="#l-hole"/></svg></button></div>
    <div class="tool"><button aria-label="Revision symbol" disabled><svg class="i20"><use href="#l-rev"/></svg></button></div>
    <div class="tool"><button aria-label="Area hatch" disabled><svg class="i20"><use href="#l-hatch"/></svg></button></div>
    <div class="tool"><button aria-label="Block"><svg class="i20"><use href="#l-block"/></svg></button><button class="dd" aria-label="Block options"></button></div>
    <hr>
    <div class="tool"><button aria-label="Center mark" disabled><svg class="i20"><use href="#l-ctr"/></svg></button></div>
    <div class="tool"><button aria-label="Centerline" disabled><svg class="i20"><use href="#l-cl"/></svg></button></div>
    <hr>
    <div class="tool"><button aria-label="Tables"><svg class="i20"><use href="#l-tab"/></svg></button><button class="dd" aria-label="Table options"></button></div>
    <hr class="wide">
  </aside>

  <section class="panel">
    <div class="handle"><i class="dot"></i></div>
    <div class="panel-tabs">
      <button class="active" aria-label="Feature tree"><svg class="i20"><use href="#part"/></svg></button>
      <button aria-label="Properties"><svg class="i20"><use href="#prop"/></svg></button>
      <button aria-label="Configurations"><svg class="i20"><use href="#config"/></svg></button>
      <button aria-label="DimXpert manager"><svg class="i20"><use href="#cross"/></svg></button>
      <button aria-label="Display manager"><svg class="i20"><use href="#ball"/></svg></button>
      <button class="more" aria-label="More"><svg class="i14" viewBox="0 0 14 14"><path d="M5 2l4 5-4 5" fill="none" stroke="#555" stroke-width="2"/></svg></button>
    </div>
    <div class="filter"><svg class="i18"><use href="#filter"/></svg><input type="text" aria-label="Filter tree"></div>
    <div class="tree-box">
      <ul class="tree">
        <li class="root"><svg class="i18"><use href="#part"/></svg><span>NoQuedarseInmovil&nbsp;&nbsp; (Predeterminado&lt;&lt;P</span></li>
        <li><button class="ex" aria-label="Expand"></button><svg class="i18"><use href="#t-hist"/></svg><span>History</span></li>
        <li><i></i><svg class="i18"><use href="#t-sens"/></svg><span>Sensors</span></li>
        <li><button class="ex" aria-label="Expand"></button><svg class="i18"><use href="#t-ann"/></svg><span>Anotaciones</span></li>
        <li><button class="ex" aria-label="Expand"></button><svg class="i18"><use href="#t-solid"/></svg><span>Solid Bodies(1)</span></li>
        <li><i></i><svg class="i18"><use href="#t-eq"/></svg><span>Ecuaciones</span></li>
        <li><i></i><svg class="i18"><use href="#t-mat"/></svg><span>Material &lt;not specified&gt;</span></li>
        <li><i></i><svg class="i18"><use href="#t-plane"/></svg><span>Alzado</span></li>
        <li><i></i><svg class="i18"><use href="#t-plane"/></svg><span>Planta</span></li>
        <li><i></i><svg class="i18"><use href="#t-plane"/></svg><span>Vista lateral</span></li>
        <li><i></i><svg class="i18"><use href="#t-orig"/></svg><span>Origen</span></li>
        <li><i></i><svg class="i18"><use href="#t-plane"/></svg><span>Plane1</span></li>
        <li><i></i><svg class="i18"><use href="#t-plane"/></svg><span>Plane2</span></li>
        <li><i></i><svg class="i18"><use href="#t-plane"/></svg><span>Plane3</span></li>
        <li><button class="ex" aria-label="Expand"></button><svg class="i18"><use href="#t-loft"/></svg><span>Loft A B C</span></li>
        <li><button class="ex open" aria-label="Collapse"></button><svg class="i18"><use href="#t-cut"/></svg><span>recorte excedente</span></li>
        <li class="child"><div class="selected"><svg class="i18"><use href="#t-sk"/></svg><span>(-) Sketch23</span></div></li>
        <li class="off after-bar"><button class="ex" aria-label="Expand"></button><svg class="i18"><use href="#t-fill"/></svg><span>relleno 1</span></li>
        <li class="off"><button class="ex" aria-label="Expand"></button><svg class="i18"><use href="#t-fill"/></svg><span>relleno 2</span></li>
        <li class="off"><i></i><svg class="i18"><use href="#t-move"/></svg><span>Body-Move/Copy1</span></li>
        <li class="off"><i></i><svg class="i18"><use href="#t-comb"/></svg><span>Combine4</span></li>
        <li class="off"><i></i><svg class="i18"><use href="#t-comb"/></svg><span>Combine6</span></li>
        <li class="off"><button class="ex" aria-label="Expand"></button><svg class="i18"><use href="#t-fold"/></svg><span>COSTILLAS</span></li>
      </ul>
      <svg class="relations" viewBox="0 0 247 400" aria-hidden="true">
        <g fill="none" stroke="#1b80c4" stroke-width="2"><path d="M94 186h90q16 0 18 11v156M114 318h70q14 0 18 9"/></g>
        <path d="M86 186l9-4v8zM106 318l9-4v8z" fill="#1b80c4"/>
        <path d="M140 362h54" stroke="#777" stroke-width="2" stroke-dasharray="4 3"/>
        <circle cx="202" cy="362" r="7.500" fill="#eee" stroke="#333" stroke-width="1.500"/>
      </svg>
    </div>
    <div class="scroll">
      <button aria-label="Scroll left"><svg class="i14" viewBox="0 0 14 14"><path d="M9 3L5 7l4 4" fill="none" stroke="#555" stroke-width="2"/></svg></button>
      <span class="track"><i></i></span>
      <button aria-label="Scroll right"><svg class="i14" viewBox="0 0 14 14"><path d="M5 3l4 4-4 4" fill="none" stroke="#555" stroke-width="2"/></svg></button>
    </div>
  </section>

  <section class="viewport">
    <div class="splitter"><i class="dot"></i></div>
    <svg class="model" viewBox="0 0 1568 1568" preserveAspectRatio="none" role="img" aria-label="Shaded part">
      <defs>
        <path id="body" d="M318 475Q382 560 380 690Q378 780 350 850Q290 1040 80 1092L82 1180L215 1271Q400 1346 690 1346Q1000 1338 1250 1240Q1410 1170 1470 1095Q1507 1045 1507 1010Q1500 945 1440 885Q1390 843 1375 833Q1365 828 1355 829Q1330 835 1305 835Q1230 834 1190 810Q1108 715 1105 610Q1105 500 1165 435L1000 460L690 490L400 475Z"/>
        <path id="ring" d="M98 335Q100 295 140 285L148 286Q200 345 355 382Q500 426 690 427Q850 424 963 402Q1160 370 1240 285Q1290 215 1215 150L1115 85Q1130 81 1145 91L1240 160Q1311 215 1311 280Q1308 335 1250 390Q1200 430 1160 443Q1010 518 690 518Q480 516 318 480Q200 445 110 368Q98 355 98 335Z"/>
        <path id="innerR" d="M963 404Q980 240 1095 100Q1105 84 1125 84Q1138 84 1150 97L1240 165Q1300 220 1258 290Q1190 375 963 404Z"/>
        <path id="innerL" d="M144 285Q270 290 358 384Q230 385 150 310Z"/>
        <clipPath id="cBody"><use href="#body"/></clipPath>
        <clipPath id="cRing"><use href="#ring"/></clipPath>
        <clipPath id="cInR"><use href="#innerR"/></clipPath>
        <linearGradient id="mBody" gradientUnits="userSpaceOnUse" x1="660" y1="490" x2="790" y2="1260"><stop offset="0" stop-color="#40434b"/><stop offset=".1" stop-color="#41444c"/><stop offset=".16" stop-color="#51545f"/><stop offset=".23" stop-color="#757888"/><stop offset=".31" stop-color="#9a9eb4"/><stop offset=".38" stop-color="#b2b6d1"/><stop offset=".45" stop-color="#c8ceec"/><stop offset=".53" stop-color="#dae0ff"/><stop offset=".8" stop-color="#e7f0ff"/><stop offset="1" stop-color="#d4daf9"/></linearGradient>
        <linearGradient id="mInR" gradientUnits="userSpaceOnUse" x1="1120" y1="110" x2="1080" y2="400"><stop offset="0" stop-color="#b8bfdd"/><stop offset=".5" stop-color="#a6aac3"/><stop offset="1" stop-color="#858899"/></linearGradient>
        <linearGradient id="mInL" x1="0" x2="1" y2=".8"><stop offset="0" stop-color="#c9cfed"/><stop offset="1" stop-color="#8c8fa2"/></linearGradient>
        <filter id="b8" filterUnits="userSpaceOnUse" x="-100" y="-100" width="1800" height="1800"><feGaussianBlur stdDeviation="8"/></filter>
        <filter id="b14" filterUnits="userSpaceOnUse" x="-100" y="-100" width="1800" height="1800"><feGaussianBlur stdDeviation="13"/></filter>
        <filter id="b40" filterUnits="userSpaceOnUse" x="-100" y="-100" width="1800" height="1800"><feGaussianBlur stdDeviation="38"/></filter>
      </defs>
      <g clip-path="url(#cBody)">
        <use href="#body" fill="url(#mBody)"/>
        <path d="M300 460Q470 600 430 700Q400 690 350 760Z" fill="#33363d" filter="url(#b40)"/>
        <path d="M395 640Q400 850 300 970" fill="none" stroke="#777a8a" stroke-width="70" opacity=".7" filter="url(#b40)"/>
        <path d="M60 1080Q260 1040 400 880L380 1100L240 1180Z" fill="#ccd2f0" opacity=".75" filter="url(#b40)"/>
        <path d="M1090 640Q1110 790 1270 900" fill="none" stroke="#9ea2b8" stroke-width="50" opacity=".75" filter="url(#b40)"/>
        <path d="M1180 800Q1300 900 1400 870Q1480 960 1440 1040Q1340 980 1180 900Z" fill="#c9cfec" opacity=".8" filter="url(#b40)"/>
        <ellipse cx="850" cy="1070" rx="310" ry="80" fill="#f4fbff" filter="url(#b40)"/>
        <ellipse cx="815" cy="990" rx="160" ry="85" fill="#fff" filter="url(#b40)"/>
        <ellipse cx="815" cy="995" rx="130" ry="70" fill="#fff" filter="url(#b40)"/>
        <path d="M200 1178Q430 1250 690 1254Q1000 1245 1220 1170Q1450 1080 1470 990Q1470 940 1400 870" fill="none" stroke="#ccd3f4" stroke-width="22" filter="url(#b14)"/>
        <path d="M220 1215Q450 1282 700 1284Q1000 1272 1240 1190Q1420 1115 1478 1020" fill="none" stroke="#e2ebff" stroke-width="26" filter="url(#b14)"/>
        <path d="M500 1275Q800 1305 1120 1228" fill="none" stroke="#fff" stroke-width="20" filter="url(#b14)"/>
        <path d="M215 1282Q400 1352 690 1354Q1000 1348 1255 1248Q1420 1175 1480 1095Q1514 1045 1512 1000" fill="none" stroke="#33353d" stroke-width="44" filter="url(#b14)"/>
        <path d="M1510 1010Q1500 945 1440 885Q1390 843 1355 829" fill="none" stroke="#8d91a8" stroke-width="14" filter="url(#b8)"/>
      </g>
      <path d="M79 1092L150 1140Q230 1195 231 1250Q230 1275 205 1268L82 1182Z" fill="#585c68"/>
      <g clip-path="url(#cInR)">
        <use href="#innerR" fill="url(#mInR)"/>
        <path d="M1040 390Q1180 350 1240 270" fill="none" stroke="#747787" stroke-width="36" filter="url(#b14)"/>
        <path d="M1150 110Q1290 200 1262 270Q1240 320 1160 355" fill="none" stroke="#ccd2f0" stroke-width="20" filter="url(#b8)"/>
      </g>
      <use href="#innerL" fill="url(#mInL)"/>
      <g clip-path="url(#cRing)">
        <use href="#ring" fill="#d0d6f5"/>
        <path d="M150 320Q300 430 690 458Q1000 450 1170 380Q1290 320 1290 260" fill="none" stroke="#e3ebff" stroke-width="36" filter="url(#b14)"/>
        <path d="M500 448Q760 485 1060 412" fill="none" stroke="#fff" stroke-width="24" filter="url(#b14)"/>
        <path d="M355 378Q500 422 690 423Q850 420 963 398Q1120 380 1200 320" fill="none" stroke="#a4a9c3" stroke-width="12" filter="url(#b8)"/>
        <path d="M88 335Q90 362 108 375Q200 452 318 488Q480 524 690 526Q1010 526 1165 450Q1220 425 1255 395Q1312 340 1316 280" fill="none" stroke="#33353d" stroke-width="42" filter="url(#b14)"/>
        <path d="M1315 285Q1311 215 1240 160L1145 91" fill="none" stroke="#a4a9c3" stroke-width="12" filter="url(#b8)"/>
      </g>
      <path d="M82 1181L515 1507" stroke="#4aa3ff" stroke-width="4"/>
    </svg>
    <svg class="triad" viewBox="0 0 60 60" aria-label="Axes">
      <path d="M36 40V20" stroke="#1e6e1e" stroke-width="4"/><path d="M36 12l4 10h-8z" fill="#1f8a1f"/>
      <path d="M36 40l-18 3" stroke="#1818b0" stroke-width="4"/><path d="M10 45l10-6 1 8z" fill="#2a2ad8"/>
      <path d="M36 40l8 5" stroke="#6e1616" stroke-width="4"/><circle cx="45" cy="46" r="4.500" fill="#c01818"/>
      <g fill="none"><path d="M32 2l3 4 3-4M35 6v5" stroke="#0a8a0a"/><path d="M3.500 41.500h4l-4 8h4" stroke="#1a1aff"/><path d="M48 45l5 9M53 45l-5 9" stroke="#f01010"/></g>
    </svg>
    <p class="view-name">MEV1</p>
    <div class="taskpane">
      <button aria-label="Home"><svg class="i20"><use href="#r-home"/></svg></button>
      <button aria-label="Design library"><svg class="i20"><use href="#r-books"/></svg></button>
      <button aria-label="File explorer"><svg class="i20"><use href="#folder"/></svg></button>
      <button aria-label="View palette"><svg class="i20"><use href="#r-view"/></svg></button>
      <button class="active" aria-label="Appearances"><svg class="i20"><use href="#ball"/></svg></button>
      <button aria-label="Custom properties"><svg class="i20"><use href="#prop"/></svg></button>
    </div>
  </section>
</main>

<div class="sheet-row">
  <div class="vcr">
    <button aria-label="First"><svg viewBox="0 0 14 14"><path d="M3 2v10M11 2v10L5 7z"/></svg></button><button aria-label="Previous"><svg viewBox="0 0 14 14"><path d="M9 2v10L4 7z"/></svg></button><button aria-label="Next"><svg viewBox="0 0 14 14"><path d="M5 2v10l5-5z"/></svg></button><button aria-label="Last"><svg viewBox="0 0 14 14"><path d="M11 2v10M3 2v10l6-5z"/></svg></button>
  </div>
  <button class="sheet active">Model</button><button class="sheet">3D Views</button><button class="sheet">Motion Study 1</button>
</div>

<div class="bottom-tools">
  <span class="grip-v"></span>
  <button aria-label="Filter" disabled><svg class="i20"><use href="#f0"/></svg></button>
  <button aria-label="Clear filters" disabled><svg class="i20"><use href="#f1"/></svg></button>
  <button aria-label="All filters"><svg class="i20"><use href="#f2"/></svg></button>
  <span class="pick"><button class="on" aria-label="Select"><svg class="i20"><use href="#cursor"/></svg></button><button class="dd" aria-label="Select options"></button></span>
  <button aria-label="Select over"><svg class="i20"><use href="#cursors"/></svg></button>
  <span class="divider"></span>
  <div class="filters">
    <button aria-label="Vertices"><svg class="i20"><use href="#s1"/></svg></button>
    <button aria-label="Edges"><svg class="i20"><use href="#s2"/></svg></button>
    <button aria-label="Faces"><svg class="i20"><use href="#s3"/></svg></button>
    <button aria-label="Surfaces"><svg class="i20"><use href="#s4"/></svg></button>
    <button aria-label="Solids"><svg class="i20"><use href="#s5"/></svg></button>
    <button aria-label="Axes"><svg class="i20"><use href="#s6"/></svg></button>
    <button aria-label="Planes"><svg class="i20"><use href="#s7"/></svg></button>
    <button aria-label="Points"><svg class="i20"><use href="#s8"/></svg></button>
    <button aria-label="Sketches"><svg class="i20"><use href="#s9"/></svg></button>
    <button aria-label="Segments"><svg class="i20"><use href="#s10"/></svg></button>
    <button aria-label="Midpoints"><svg class="i20"><use href="#s11"/></svg></button>
    <button aria-label="Center marks"><svg class="i20"><use href="#s12"/></svg></button>
    <button aria-label="Centerlines"><svg class="i20"><use href="#s13"/></svg></button>
    <button aria-label="Dimensions"><svg class="i20"><use href="#s14"/></svg></button>
    <button aria-label="Surface finishes"><svg class="i20"><use href="#l-surf"/></svg></button>
    <button class="up" aria-label="Tolerances"><svg class="i20"><use href="#l-tol"/></svg></button>
    <button aria-label="Notes"><svg class="i20"><use href="#s-bal"/></svg></button>
    <button aria-label="Datums"><svg class="i20"><use href="#l-datum"/></svg></button>
    <button aria-label="Weld symbols"><svg class="i20"><use href="#l-weld"/></svg></button>
    <button aria-label="Weld beads"><svg class="i20"><use href="#s20"/></svg></button>
    <button aria-label="Datum targets"><svg class="i20"><use href="#l-dt"/></svg></button>
    <button aria-label="Cosmetic threads"><svg class="i20"><use href="#s22"/></svg></button>
    <button aria-label="Blocks"><svg class="i20"><use href="#l-block"/></svg></button>
    <button aria-label="Center of mass"><svg class="i20"><use href="#s24"/></svg></button>
    <button aria-label="Connection points"><svg class="i20"><use href="#s25"/></svg></button>
    <button aria-label="Routing points"><svg class="i20"><use href="#s26"/></svg></button>
  </div>
</div>

<footer class="status">
  <span class="msg">NoQuedarseInmovil</span>
  <span class="cells"><i></i><i></i><i></i><i></i></span>
  <span class="units">MMGS</span>
  <button class="dd up-arrow" aria-label="Unit system"></button>
  <button class="tag" aria-label="Tags"><svg class="i18"><use href="#tag"/></svg></button>
</footer>
</body>
</html>
```
FILE: styles.css
```css
* { box-sizing: border-box; }
html, body { height: 100%; }
body {
  margin: 0;
  display: flex;
  flex-direction: column;
  min-height: 100vh;
  overflow: hidden;
  background: #fff;
  color: #000;
  font: 11px/14px "Open Sans", "Noto Sans", sans-serif;
}
button {
  border: 0;
  padding: 0;
  margin: 0;
  background: none;
  color: inherit;
  font: inherit;
  display: flex;
  align-items: center;
  justify-content: center;
}
input { font: inherit; border: 0; padding: 0; margin: 0; outline: 0; min-width: 0; }
a { color: inherit; text-decoration: none; }
svg { display: block; flex: none; }
ul { list-style: none; margin: 0; padding: 0; }
.defs { position: absolute; width: 0; height: 0; }
.serif { font-family: "Liberation Serif", serif; font-weight: bold; }
.sans { font-family: "Open Sans", sans-serif; }
.i20 { width: 20px; height: 20px; }
.i18 { width: 18px; height: 18px; }
.i14 { width: 14px; height: 14px; }

.dd { width: 13px; align-self: stretch; }
.dd::after {
  content: "";
  border: 3px solid transparent;
  border-top-color: #444;
  border-bottom: 0;
}
.grip-v { width: 3px; height: 26px; background: repeating-linear-gradient(#999 0 2px, transparent 2px 4px); }
.dot { width: 6px; height: 6px; border: 1px solid #888; border-radius: 50%; background: #ccc; }
.pick { display: flex; border: 1px solid #999; height: 26px; background: #f7f7f7; }
.pick .on { width: 26px; background: #b0b0b0; border-right: 1px solid #888; }
.pick .dd { width: 12px; }

/* title bar */
.titlebar { display: flex; align-items: center; height: 31px; background: #e5e5e5; border-bottom: 1px solid #808080; padding-left: 10px; position: relative; z-index: 3; }
.brand {
  align-self: flex-start;
  flex: none;
  display: flex;
  align-items: center;
  width: 145px;
  height: 35px;
  padding: 0 4px 0 6px;
  border: 1px solid #999;
  border-top: 0;
  background: linear-gradient(160deg, #fff 45%, #d4d4d4);
}
.ds { width: 28px; height: 30px; }
.word { color: #d9261c; font: italic 16px/20px "Open Sans", sans-serif; padding: 5px 0 0 4px; }
.menu { display: flex; align-items: center; align-self: stretch; flex: none; gap: 17px; width: 455px; padding: 2px 0 0 28px; background: #f7f7f7; border-right: 2px solid #999; }
.menu button { margin-left: 8px; }
.quick { display: flex; align-items: center; flex: none; padding-left: 12px; }
.quick > button:not(.dd) { width: 26px; }
.quick > .pick ~ button:not(.dd) { width: 25px; }
.titlebar h1 { flex: 1; margin: 0; padding-top: 1px; text-align: center; font: inherit; }
.search { display: flex; align-items: center; flex: none; width: 202px; height: 23px; border: 1px solid #bbb; background: #f7f7f7; padding-left: 4px; }
.search input { flex: 1; height: 19px; margin-left: 2px; padding-left: 3px; background: #ebeef2; color: #444; }
.search input::placeholder { color: #666; opacity: 1; }
.search button { margin-left: 3px; }
.search .dd { margin: 0; opacity: .7; }
.window-buttons { display: flex; align-items: center; flex: none; width: 122px; color: #333; padding-left: 4px; }
.window-buttons button:not(.dd) { width: 26px; }
.window-buttons .dd { height: 14px; margin-right: 2px; }
.window-buttons .help { font-size: 18px; font-weight: 700; }

/* ribbon */
.ribbon-row { display: flex; height: 87px; background: #f7f7f7; }
.ribbon {
  flex: 1;
  display: grid;
  grid-template-columns: 70px 71px 71px 41px 38px 46px 4px 64px 54px 46px 49px 70px 54px 54px 50px;
  padding: 18px 0 0 6px;
  border: 1px solid #808080;
  border-width: 0 1px 1px 0;
}
.ribbon button { flex-direction: column; justify-content: flex-start; line-height: 13px; white-space: nowrap; text-align: center; }
.ribbon button:disabled { color: #a8a8a8; }
.ribbon .divider { justify-self: center; width: 1px; height: 77px; margin-top: -12px; background: #bbb; }
.ribbon-side { width: 372px; }
.capture { display: flex; align-items: center; width: 102px; height: 33px; border: 1px solid #808080; border-width: 1px 1px 1px 0; padding-left: 3px; gap: 7px; }
.capture .grip-v { margin-right: 3px; }

/* command tabs and heads-up bar */
.tab-row { display: flex; align-items: flex-start; height: 22px; position: relative; z-index: 2; }
.tabs { display: grid; grid-template-columns: 60px 56px 60px 66px 88px 133px 117px; height: 22px; border-bottom: 1px solid #808080; }
.tabs button { background: #d2d2d2; border-right: 1px solid #808080; color: #222; font-size: 12px; white-space: nowrap; }
.tabs .active { background: #f7f7f7; font-size: 11px; font-weight: 700; color: #333; margin-top: -1px; }
.hud { display: flex; align-items: center; height: 30px; margin: 0 auto 0 348px; opacity: .85; }
.hud button:not(.dd) { width: 26px; }
.hud .dd { width: 14px; opacity: .7; }
.doc-buttons { display: flex; gap: 12px; height: 30px; padding-right: 13px; color: #999; }

/* work area */
.work { flex: 1; display: flex; min-height: 0; }
.side-tools { width: 47px; background: #f7f7f7; display: flex; flex-direction: column; }
.grip-h { height: 3px; margin: 2px 2px 8px 3px; background: repeating-linear-gradient(90deg, #999 0 2px, transparent 2px 4px); }
.tool { display: flex; align-items: center; height: 26px; padding-left: 6px; }
.tool .dd { margin-left: 5px; }
.tool.pale .dd { opacity: .5; }
.side-tools hr { width: 40px; height: 1px; margin: 3px 0 4px 5px; border: 0; background: #888; }
.side-tools .wide { width: 45px; margin: 7px 0 0; }

.panel { width: 249px; background: #f7f7f7; display: flex; flex-direction: column; padding-right: 2px; }
.handle { display: flex; align-items: center; justify-content: center; height: 16px; margin: 2px 0 4px; border: 1px solid #bbb; border-width: 1px 0; }
.panel-tabs { display: flex; height: 26px; border-bottom: 1px solid #808080; }
.panel-tabs button { width: 40px; border: 1px solid #808080; border-width: 1px 1px 0 0; background: #d2d2d2; }
.panel-tabs .active { background: #f7f7f7; height: 26px; }
.panel-tabs .more { border: 0; background: none; margin-left: auto; width: 17px; }
.filter { display: flex; align-items: center; height: 26px; margin: 0 1px 1px 3px; border: 1px solid #bbb; padding-left: 2px; }
.filter input { flex: 1; background: transparent; }
.tree-box { flex: 1; position: relative; overflow: hidden; }
.tree { font-size: 11px; }
.tree li { display: flex; align-items: center; height: 22px; padding-left: 5px; white-space: nowrap; }
.tree li > i, .ex { width: 10px; margin-right: 10px; }
.tree li > svg { margin-right: 5px; }
.tree .root { padding-left: 3px; }
.tree .root > svg { margin-right: 4px; }
.tree .child { padding-left: 45px; }
.tree .off { color: #808080; }
.selected { display: flex; align-items: center; height: 22px; width: 93px; padding-left: 2px; gap: 5px; background: #a8c8e4; border: 1px solid #3b82b5; }
.tree .after-bar { box-shadow: inset 0 1px #2b80c0, inset 0 2px #1d1fae, 0 -1px #2b80c0; }
.ex::after { content: ""; border: 4px solid transparent; border-left-color: #555; border-right: 0; }
.ex.open::after { border: 4px solid transparent; border-top-color: #555; border-bottom: 0; }
.relations { position: absolute; left: 0; top: 0; width: 247px; height: 400px; }
.scroll { display: flex; height: 15px; margin-bottom: 2px; background: #efefef; }
.scroll button { width: 15px; }
.track { flex: 1; display: flex; }
.track i { width: 52%; background: #cdcdcd; }

.viewport { flex: 1; position: relative; border-left: 1px solid #808080; background: #fff; min-width: 0; }
.splitter { position: absolute; left: -1px; top: 405px; width: 9px; height: 39px; border: 1px solid #808080; border-left: 0; background: #f7f7f7; display: flex; align-items: center; justify-content: center; }
.model { position: absolute; left: 423px; top: 90px; width: 720px; height: 660px; }
.triad { position: absolute; left: 3px; bottom: 39px; width: 60px; height: 60px; }
.view-name { position: absolute; left: 10px; bottom: 2px; margin: 0; font-size: 12px; font-weight: 700; }
.taskpane { position: absolute; right: 0; top: 28px; width: 26px; border: 1px solid #808080; border-right: 0; }
.taskpane button { width: 100%; height: 24px; background: #d2d2d2; border-bottom: 1px solid #808080; }
.taskpane button:last-child { border-bottom: 0; }
.taskpane .active { background: #f7f7f7; }

/* bottom rows */
.sheet-row { display: flex; height: 16px; padding-left: 73px; background: #f7f7f7; border-top: 1px solid #808080; }
.vcr { display: grid; grid-template-columns: repeat(4, 16px); background: #8a8a8a; border-top: 1px solid #333; width: 66px; height: 14px; padding: 0 1px; }
.vcr button { background: #a9a9ad; border: 1px solid #888; }
.vcr svg { width: 12px; height: 12px; fill: #888; stroke: #888; }
.sheet { height: 14px; padding-bottom: 1px; border-right: 1px solid #808080; background: #d2d2d2; color: #222; width: 68px; }
.sheet.active { width: 57px; background: #f7f7f7; color: #000; font-weight: 700; }
.sheet:last-child { width: 108px; padding-right: 14px; }
.bottom-tools { display: flex; align-items: center; height: 33px; background: #f7f7f7; border-bottom: 1px solid #808080; padding: 0 0 0 3px; }
.bottom-tools > button { width: 27px; }
.bottom-tools > .grip-v { margin-right: 7px; }
.bottom-tools .pick { width: 42px; }
.bottom-tools .divider { width: 1px; height: 22px; margin: 0 4px 0 3px; background: #808080; }
.filters { display: flex; align-self: stretch; align-items: center; border-right: 1px solid #808080; padding-right: 7px; }
.filters button { width: 27px; position: relative; }
.filters button::after {
  content: "";
  position: absolute;
  right: 2px;
  bottom: 0;
  width: 7px;
  height: 7px;
  background: #9a5cb4;
  clip-path: polygon(0 0, 100% 0, 100% 35%, 70% 55%, 70% 100%, 30% 100%, 30% 55%, 0 35%);
}
.filters .up svg { margin: -4px 0 4px; }
.filters .up::after { bottom: 0; }
.status { display: flex; align-items: center; height: 20px; background: #e5e5e5; padding: 0 2px 2px 1px; }
.msg { flex: 1; }
.cells { display: flex; width: 64px; gap: 7px; }
.cells i { width: 1px; height: 16px; background: #ccc; }
.cells i:last-child { margin-left: 8px; }
.units { width: 36px; }
.up-arrow { margin-left: 14px; }
.up-arrow::after { border-top: 0; border-bottom: 3px solid #444; }
.tag { margin-left: 62px; }
```
